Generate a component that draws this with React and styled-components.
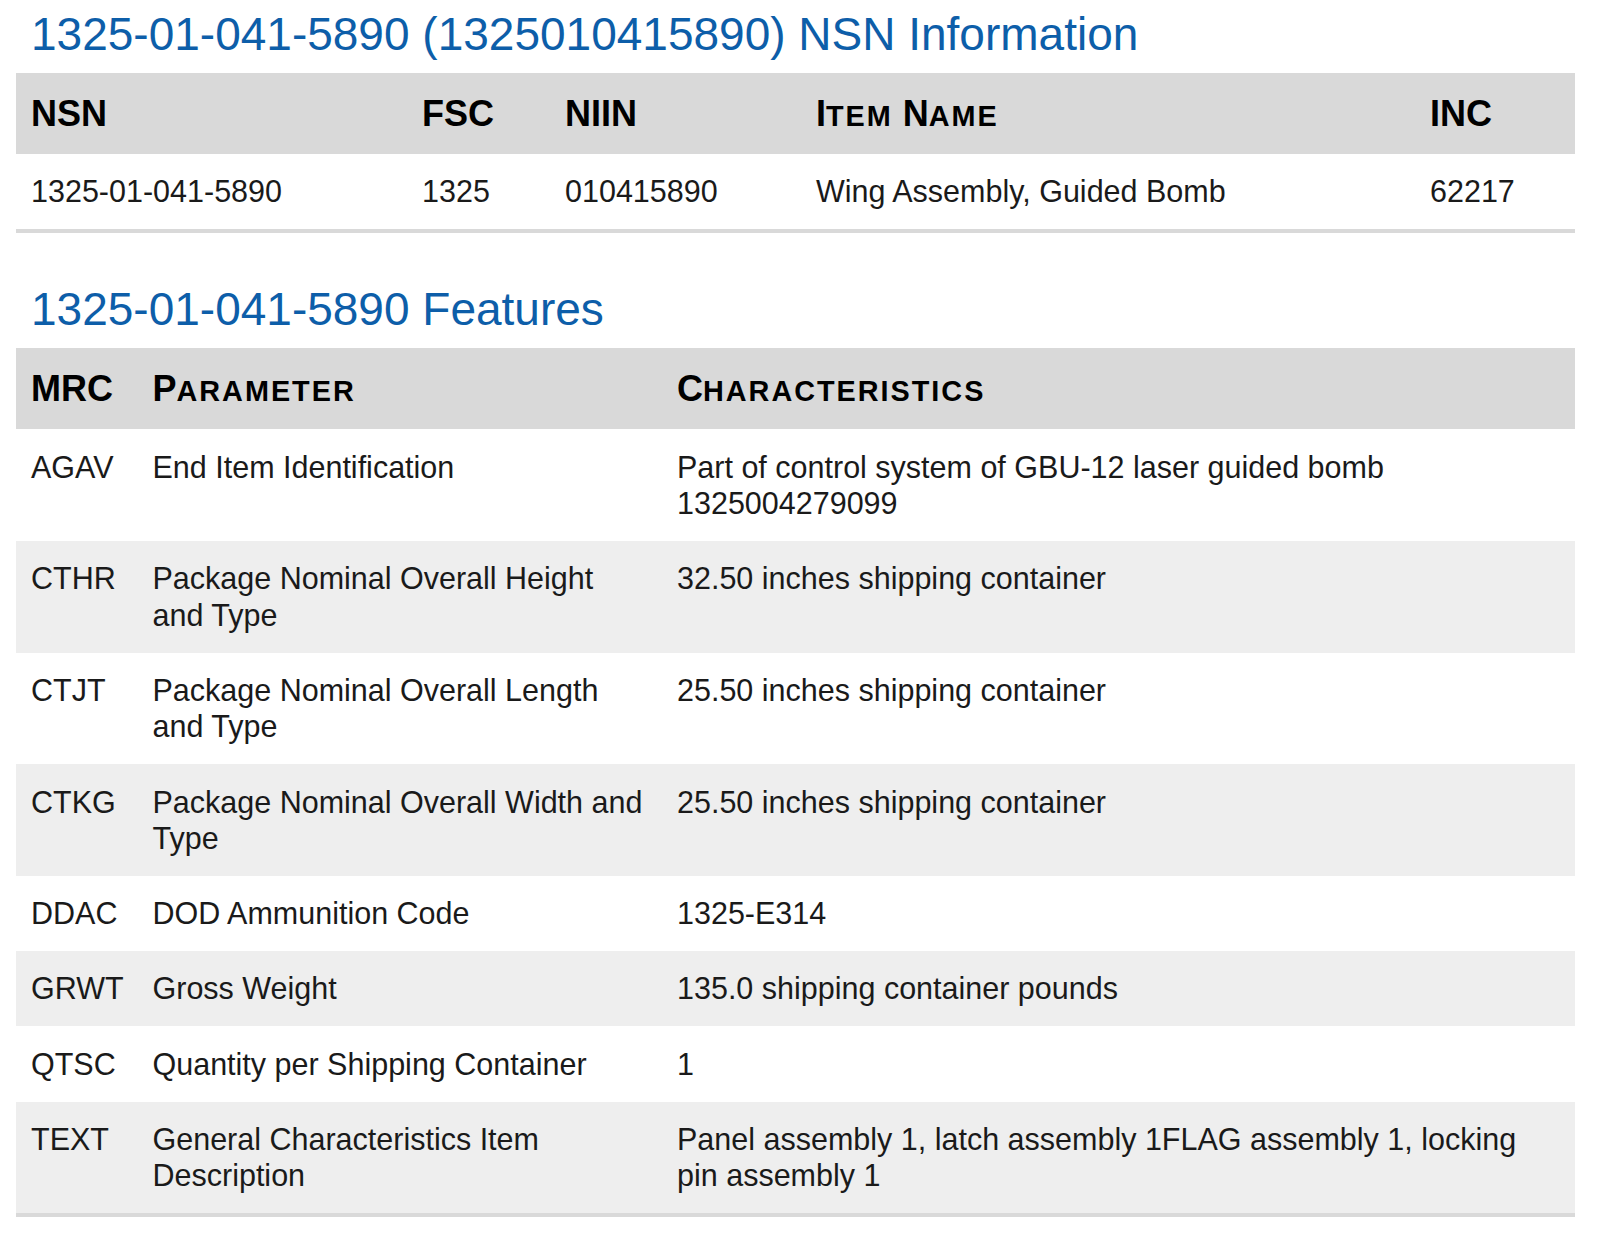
import React from 'react'
import styled, { createGlobalStyle } from 'styled-components'

const GlobalStyle = createGlobalStyle`
    body {
        margin: 0;
        background: #fff;
        font-family: "Liberation Sans", Arial, sans-serif;
        color: #1a1a1a;
    }
`

const Page = styled.div`
    padding: 0 25px 24px 16px;
`

const Title = styled.h2`
    font-size: 46px;
    font-weight: 400;
    line-height: 52px;
    color: #0d5ea9;
    margin: ${props => props.$first ? '8px' : '50px'} 0 13px 15px;
`

const Table = styled.table`
    width: 100%;
    border-collapse: collapse;
    table-layout: fixed;
    border-bottom: 4px solid #d9d9d9;
`

const HeadCell = styled.th`
    box-sizing: border-box;
    width: ${props => props.$w ? props.$w + 'px' : 'auto'};
    background: #d9d9d9;
    color: #000;
    text-align: left;
    font-size: 36px;
    font-weight: 700;
    line-height: 42px;
    padding: 19.5px 15px;
`

// header words set in small caps: first letter full size, rest shrunk
const SmallCaps = styled.span`
    font-size: 0.8em;
    line-height: 1;
    text-transform: uppercase;
    letter-spacing: 2px;
`

const Row = styled.tr`
    &:nth-child(even) {
        background: #eeeeee;
    }
`

const Cell = styled.td`
    box-sizing: border-box;
    font-size: 30.5px;
    line-height: 36.5px;
    padding: 19.35px ${props => props.$last ? '20px' : '15px'} 19.35px 15px;
    vertical-align: top;
`

const nsn = {
    nsn: '1325-01-041-5890',
    fsc: '1325',
    niin: '010415890',
    name: 'Wing Assembly, Guided Bomb',
    inc: '62217'
}

const features = [
    ['AGAV', 'End Item Identification', 'Part of control system of GBU-12 laser guided bomb 1325004279099'],
    ['CTHR', 'Package Nominal Overall Height and Type', '32.50 inches shipping container'],
    ['CTJT', 'Package Nominal Overall Length and Type', '25.50 inches shipping container'],
    ['CTKG', 'Package Nominal Overall Width and Type', '25.50 inches shipping container'],
    ['DDAC', 'DOD Ammunition Code', '1325-E314'],
    ['GRWT', 'Gross Weight', '135.0 shipping container pounds'],
    ['QTSC', 'Quantity per Shipping Container', '1'],
    ['TEXT', 'General Characteristics Item Description', 'Panel assembly 1, latch assembly 1FLAG assembly 1, locking pin assembly 1']
]

const App = () => {
    return (
        <Page>
            <GlobalStyle />
            <Title $first>1325-01-041-5890 (1325010415890) NSN Information</Title>
            <Table>
                <thead>
                    <tr>
                        <HeadCell $w={391}>NSN</HeadCell>
                        <HeadCell $w={143}>FSC</HeadCell>
                        <HeadCell $w={251}>NIIN</HeadCell>
                        <HeadCell $w={614}>I<SmallCaps>tem</SmallCaps> N<SmallCaps>ame</SmallCaps></HeadCell>
                        <HeadCell>INC</HeadCell>
                    </tr>
                </thead>
                <tbody>
                    <Row>
                        <Cell>{nsn.nsn}</Cell>
                        <Cell>{nsn.fsc}</Cell>
                        <Cell>{nsn.niin}</Cell>
                        <Cell>{nsn.name}</Cell>
                        <Cell $last>{nsn.inc}</Cell>
                    </Row>
                </tbody>
            </Table>

            <Title>1325-01-041-5890 Features</Title>
            <Table>
                <thead>
                    <tr>
                        <HeadCell $w={121.5}>MRC</HeadCell>
                        <HeadCell $w={524.5}>P<SmallCaps>arameter</SmallCaps></HeadCell>
                        <HeadCell>C<SmallCaps>haracteristics</SmallCaps></HeadCell>
                    </tr>
                </thead>
                <tbody>
                    {features.map(([mrc, param, value]) => (
                        <Row key={mrc}>
                            <Cell>{mrc}</Cell>
                            <Cell>{param}</Cell>
                            <Cell $last>{value}</Cell>
                        </Row>
                    ))}
                </tbody>
            </Table>
        </Page>
    )
}

export default App
